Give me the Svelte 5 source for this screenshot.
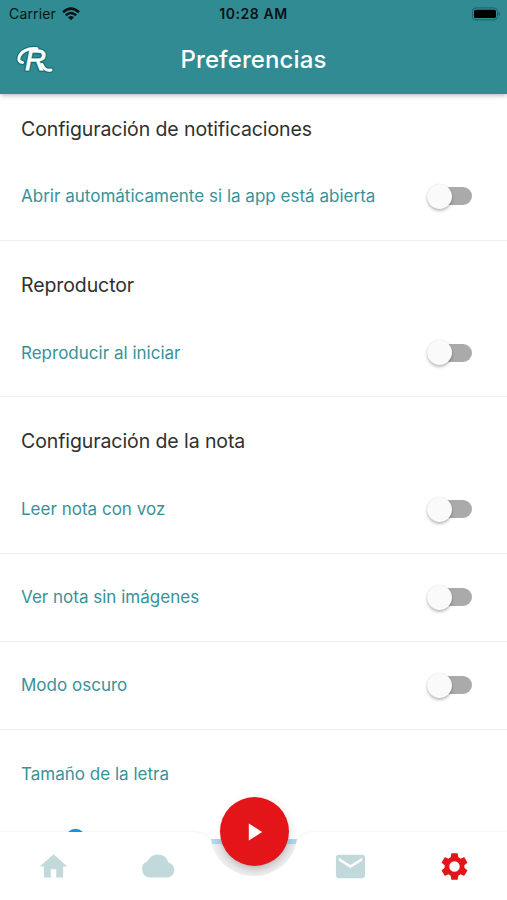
<script>
  const sections = [
    { title: 'Configuración de notificaciones', rows: ['Abrir automáticamente si la app está abierta'] },
    { title: 'Reproductor', rows: ['Reproducir al iniciar'] },
    {
      title: 'Configuración de la nota',
      rows: ['Leer nota con voz', 'Ver nota sin imágenes', 'Modo oscuro']
    }
  ];
</script>

<div class="screen">
  <header>
    <div class="status">
      <div class="carrier">
        <span>Carrier</span>
        <svg width="18" height="14" viewBox="0 0 18 14">
          <g fill="none" stroke="#071315" stroke-width="2.5">
            <path d="M1 5.2Q9-2 17 5.2" />
            <path d="M3.8 8.2Q9 3.7 14.2 8.2" />
          </g>
          <path d="M6 10.3Q9 7.8 12 10.3L9 13.3Z" fill="#071315" />
        </svg>
      </div>
      <div class="time">10:28 AM</div>
      <svg class="battery" width="30" height="14" viewBox="0 0 30 14">
        <rect x="1.5" y="0.9" width="25" height="12" rx="3.5" fill="none" stroke="#1f6268" />
        <rect x="3" y="2.7" width="22" height="8.4" rx="1.6" fill="#000" />
        <path d="M27.6 5v4q1.7-.6 1.7-2t-1.7-2Z" fill="#1f6268" />
      </svg>
    </div>
    <div class="bar">
      <svg class="logo" width="44" height="36" viewBox="0 0 44 36">
        <g class="edge">
          <text x="12" y="28" font-size="29">R</text>
          <path d="M9.500 20.500C3.500 20 5.500 12 12 8.600Q17 6 24 6.700" />
          <path d="M29 22.500Q32 29.500 38 28" />
        </g>
        <g class="face">
          <text x="12" y="28" font-size="29">R</text>
          <path d="M9.500 20.500C3.500 20 5.500 12 12 8.600Q17 6 24 6.700" />
          <path d="M29 22.500Q32 29.500 38 28" />
        </g>
      </svg>
      <h1>Preferencias</h1>
    </div>
  </header>

  <main>
    {#each sections as section}
      <h2>{section.title}</h2>
      {#each section.rows as label}
        <div class="row">
          <span>{label}</span>
          <div class="switch"><i></i></div>
        </div>
      {/each}
    {/each}
    <div class="row last"><span>Tamaño de la letra</span></div>
  </main>

  <nav>
    <svg class="shape" width="507" height="80" viewBox="0 0 507 80">
      <defs>
        <filter id="soft" x="-30%" y="-30%" width="160%" height="160%"><feGaussianBlur stdDeviation="5" /></filter>
        <filter id="lift" x="-5%" y="-20%" width="110%" height="140%"><feGaussianBlur stdDeviation="1.5" /></filter>
        <clipPath id="well"><path d="M211 19H297Q294 36 282 46Q269 56 254 56Q239 56 226 46Q214 36 211 19Z" /></clipPath>
      </defs>
      <circle cx="75.5" cy="18.800" r="10" fill="#1c94df" />
      <path d="M0 12H192Q207 12 211 22Q215 38 226 46Q239 56 254 56Q269 56 282 46Q293 38 297 22Q301 12 316 12H507V80H0Z" fill="#000" opacity=".09" filter="url(#lift)" />
      <path d="M0 12H192Q207 12 211 22Q215 38 226 46Q239 56 254 56Q269 56 282 46Q293 38 297 22Q301 12 316 12H507V80H0Z" fill="#fff" />
      <g clip-path="url(#well)">
        <rect x="205" y="19" width="100" height="40" fill="#efeff1" />
        <rect x="205" y="19" width="100" height="5" fill="#b4d7ef" />
        <circle cx="254" cy="15" r="34" fill="#888" opacity=".38" filter="url(#soft)" />
      </g>
    </svg>
    <div class="tabs">
      <svg viewBox="0 0 24 24"><path d="M10 20v-6h4v6h5v-8h3L12 3 2 12h3v8z" /></svg>
      <svg class="cloud" viewBox="0 0 35 24"><path d="M9 23.500A8.500 8.500 0 0 1 6.800 7.200Q10.300 .5 17.300 .5Q25.500 .5 28 8.600A7.600 7.600 0 0 1 27.400 23.500Z" /></svg>
      <span></span>
      <svg class="mail" viewBox="0 0 24 24"><path d="M20 4H4c-1.100 0-1.990.9-1.990 2L2 18c0 1.100.9 2 2 2h16c1.100 0 2-.9 2-2V6c0-1.100-.9-2-2-2zm0 4-8 5-8-5V6l8 5 8-5v2z" /></svg>
      <svg class="active" viewBox="0 0 24 24"><path d="M19.140 12.940c.04-.3.060-.61.060-.94 0-.32-.02-.64-.07-.94l2.030-1.580c.18-.14.230-.41.120-.61l-1.920-3.320c-.12-.22-.37-.29-.59-.22l-2.390.96c-.5-.38-1.030-.7-1.620-.94l-.36-2.540c-.04-.24-.24-.41-.48-.41h-3.840c-.24 0-.43.170-.47.410l-.36 2.540c-.59.240-1.130.570-1.620.940l-2.390-.96c-.22-.08-.47 0-.59.220L2.740 8.870c-.12.210-.08.470.120.610l2.030 1.580c-.05.300-.09.630-.09.940s.02.640.070.940l-2.030 1.580c-.18.140-.23.410-.12.610l1.920 3.320c.12.220.370.290.590.220l2.390-.96c.5.380 1.030.7 1.620.94l.36 2.540c.05.240.240.410.480.410h3.840c.24 0 .44-.17.470-.41l.36-2.540c.59-.24 1.130-.56 1.620-.94l2.390.96c.22.080.470 0 .59-.22l1.920-3.320c.12-.22.070-.47-.12-.61l-2.010-1.580zM12 15.800A3.800 3.800 0 1 1 12 8.200a3.800 3.800 0 0 1 0 7.600z" /></svg>
    </div>
    <button aria-label="Reproducir">
      <svg width="15" height="18" viewBox="0 0 15 18"><path d="M.8 .5 14.200 9 .8 17.500Z" fill="#fff" /></svg>
    </button>
  </nav>
</div>

<style>
  :global(body) { margin: 0; }
  .screen {
    position: relative;
    display: flex;
    flex-direction: column;
    width: 507px;
    height: 900px;
    overflow: hidden;
    background: #fff;
    font-family: Inter, "Liberation Sans", sans-serif;
  }
  header {
    flex: none;
    height: 94px;
    z-index: 1;
    background: #308b92;
    box-shadow: 0 1px 5px rgba(0, 0, 0, .32);
  }
  .status {
    display: grid;
    grid-template-columns: 1fr auto 1fr;
    align-items: center;
    height: 27px;
    padding: 0 6px 0 9px;
    font-size: 14px;
    color: #071315;
  }
  .carrier { display: flex; align-items: center; gap: 6px; letter-spacing: .15px; }
  .time { font-weight: 600; letter-spacing: .55px; margin-left: -3px; }
  .battery { justify-self: end; }
  .bar {
    display: grid;
    grid-template-columns: 1fr auto 1fr;
    align-items: center;
    height: 66px;
    padding: 0 13px;
  }
  .logo text { font-family: "Liberation Sans", sans-serif; font-style: italic; }
  .logo path { fill: none; stroke-linecap: round; }
  .edge { stroke: #116b70; stroke-linejoin: round; opacity: .75; }
  .edge text { fill: #116b70; stroke-width: 4; }
  .edge path { stroke-width: 5.500; }
  .face text { fill: #fff; stroke: #fff; stroke-width: .8; }
  .face path { stroke: #fff; stroke-width: 3; }
  h1 { margin: 0; color: #fff; font-size: 24px; font-weight: 550; line-height: 30px; letter-spacing: .12px; }
  main { flex: 1; margin-top: -9.500px; }
  h2 {
    box-sizing: border-box;
    height: 68.400px;
    margin: 0;
    padding: 30px 21px 0;
    color: #303030;
    font-size: 19.500px;
    font-weight: 400;
    line-height: 28px;
    letter-spacing: -.09px;
  }
  .row {
    box-sizing: border-box;
    display: flex;
    align-items: center;
    justify-content: space-between;
    height: 88px;
    padding: 0 35.500px 0 21px;
    border-bottom: 1px solid #eee;
    color: #389297;
    font-size: 17px;
    letter-spacing: .01px;
  }
  .row.last { border: 0; }
  .switch {
    display: flex;
    align-items: center;
    width: 41px;
    height: 18px;
    border-radius: 9px;
    background: #aaa;
  }
  .switch i {
    flex: none;
    width: 25px;
    height: 25px;
    margin-left: -4px;
    border-radius: 50%;
    background: #fafafa;
    box-shadow: 0 2px 3px rgba(0, 0, 0, .26), 0 0 1px rgba(0, 0, 0, .15);
  }
  nav { position: absolute; left: 0; bottom: 0; width: 507px; height: 80px; z-index: 2; }
  .shape { position: absolute; inset: 0; }
  .tabs {
    position: relative;
    display: grid;
    grid-template-columns: 107px 101px 92px 100px 109px;
    place-items: center;
    height: 80px;
    padding-top: 12px;
    box-sizing: border-box;
    fill: #c2d9dc;
  }
  .tabs svg { width: 33px; height: 33px; }
  .tabs .cloud { width: 36px; height: 24px; }
  .tabs .mail { width: 35px; height: 35px; }
  .tabs .active { fill: #e31518; }
  button {
    position: absolute;
    left: 219.500px;
    top: -23px;
    display: grid;
    place-items: center;
    width: 69px;
    height: 69px;
    padding: 0 0 0 3px;
    border: 0;
    border-radius: 50%;
    background: #e31518;
    box-shadow: 2px 2px 9px rgba(0, 0, 0, .1);
  }
</style>
